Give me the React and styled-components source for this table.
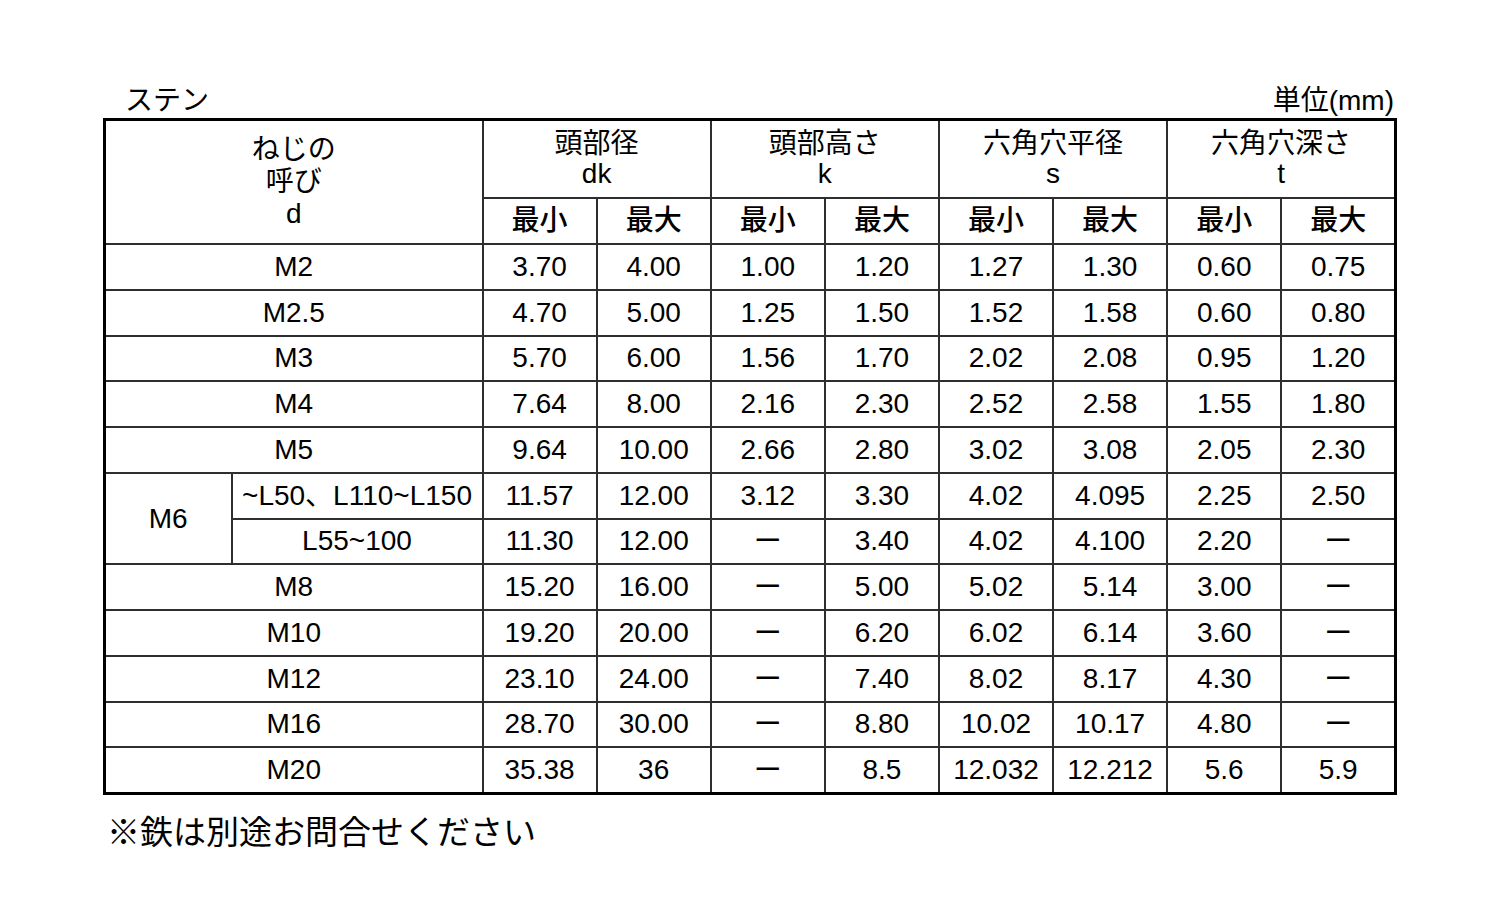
import React from 'react';
import styled, { createGlobalStyle } from 'styled-components';

const rows = [
  ['M2', '3.70', '4.00', '1.00', '1.20', '1.27', '1.30', '0.60', '0.75'],
  ['M2.5', '4.70', '5.00', '1.25', '1.50', '1.52', '1.58', '0.60', '0.80'],
  ['M3', '5.70', '6.00', '1.56', '1.70', '2.02', '2.08', '0.95', '1.20'],
  ['M4', '7.64', '8.00', '2.16', '2.30', '2.52', '2.58', '1.55', '1.80'],
  ['M5', '9.64', '10.00', '2.66', '2.80', '3.02', '3.08', '2.05', '2.30'],
];

const m6 = [
  ['~L50、L110~L150', '11.57', '12.00', '3.12', '3.30', '4.02', '4.095', '2.25', '2.50'],
  ['L55~100', '11.30', '12.00', '－', '3.40', '4.02', '4.100', '2.20', '－'],
];

const rest = [
  ['M8', '15.20', '16.00', '－', '5.00', '5.02', '5.14', '3.00', '－'],
  ['M10', '19.20', '20.00', '－', '6.20', '6.02', '6.14', '3.60', '－'],
  ['M12', '23.10', '24.00', '－', '7.40', '8.02', '8.17', '4.30', '－'],
  ['M16', '28.70', '30.00', '－', '8.80', '10.02', '10.17', '4.80', '－'],
  ['M20', '35.38', '36', '－', '8.5', '12.032', '12.212', '5.6', '5.9'],
];

const groups = [
  ['頭部径', 'dk'],
  ['頭部高さ', 'k'],
  ['六角穴平径', 's'],
  ['六角穴深さ', 't'],
];

const GlobalStyle = createGlobalStyle`
  body {
    margin: 0;
    background: #fff;
    color: #000;
    font-family: 'Liberation Sans', Arial, 'Noto Sans CJK JP', sans-serif;
  }
`;

const Page = styled.div`
  width: 1294px;
  padding: 76px 0 0 103px;
`;

const TopBar = styled.div`
  display: flex;
  justify-content: space-between;
  align-items: flex-end;
  height: 42px;
  padding: 0 3px 0 22px;
  font-size: 28px;
  line-height: 34px;
`;

const Table = styled.table`
  width: 1294px;
  table-layout: fixed;
  border-collapse: collapse;
  border: 3px solid #000;
  font-size: 28px;
`;

const Cell = styled.td`
  border: 2px solid #2e2e2e;
  padding: 0;
  text-align: center;
  vertical-align: middle;
  line-height: 30px;
  white-space: nowrap;
  height: ${p => p.$h || 43.75}px;
  font-weight: ${p => (p.$bold ? 500 : 400)};
`;

const Dash = styled.span`
  font-family: 'Noto Sans CJK JP', sans-serif;
  line-height: 1;
`;

const Note = styled.div`
  padding: 18px 0 0 4px;
  font-size: 33px;
  line-height: 40px;
`;

const Value = ({ v }) => (v === '－' ? <Dash>ー</Dash> : v);

const DataCells = ({ cells }) =>
  cells.map((v, i) => (
    <Cell key={i}>
      <Value v={v} />
    </Cell>
  ));

export default function App() {
  return (
    <>
      <GlobalStyle />
      <Page>
        <TopBar>
          <span>ステン</span>
          <span>単位(mm)</span>
        </TopBar>
        <Table>
          <colgroup>
            <col style={{ width: 127 }} />
            <col style={{ width: 251 }} />
            {Array.from({ length: 8 }).map((_, i) => (
              <col key={i} />
            ))}
          </colgroup>
          <tbody>
            <tr>
              <Cell as="th" colSpan={2} rowSpan={2} style={{ fontWeight: 400, lineHeight: '32px' }}>
                ねじの
                <br />
                呼び
                <br />d
              </Cell>
              {groups.map(([jp, sym]) => (
                <Cell as="th" key={sym} colSpan={2} $h={76} style={{ fontWeight: 400 }}>
                  {jp}
                  <br />
                  {sym}
                </Cell>
              ))}
            </tr>
            <tr>
              {groups.map(([, sym]) => (
                <React.Fragment key={sym}>
                  <Cell as="th" $h={44} $bold>
                    最小
                  </Cell>
                  <Cell as="th" $h={44} $bold>
                    最大
                  </Cell>
                </React.Fragment>
              ))}
            </tr>
            {rows.map(r => (
              <tr key={r[0]}>
                <Cell colSpan={2}>{r[0]}</Cell>
                <DataCells cells={r.slice(1)} />
              </tr>
            ))}
            {m6.map((r, i) => (
              <tr key={r[0]}>
                {i === 0 && <Cell rowSpan={2}>M6</Cell>}
                <Cell>{r[0]}</Cell>
                <DataCells cells={r.slice(1)} />
              </tr>
            ))}
            {rest.map(r => (
              <tr key={r[0]}>
                <Cell colSpan={2}>{r[0]}</Cell>
                <DataCells cells={r.slice(1)} />
              </tr>
            ))}
          </tbody>
        </Table>
        <Note>※鉄は別途お問合せください</Note>
      </Page>
    </>
  );
}
